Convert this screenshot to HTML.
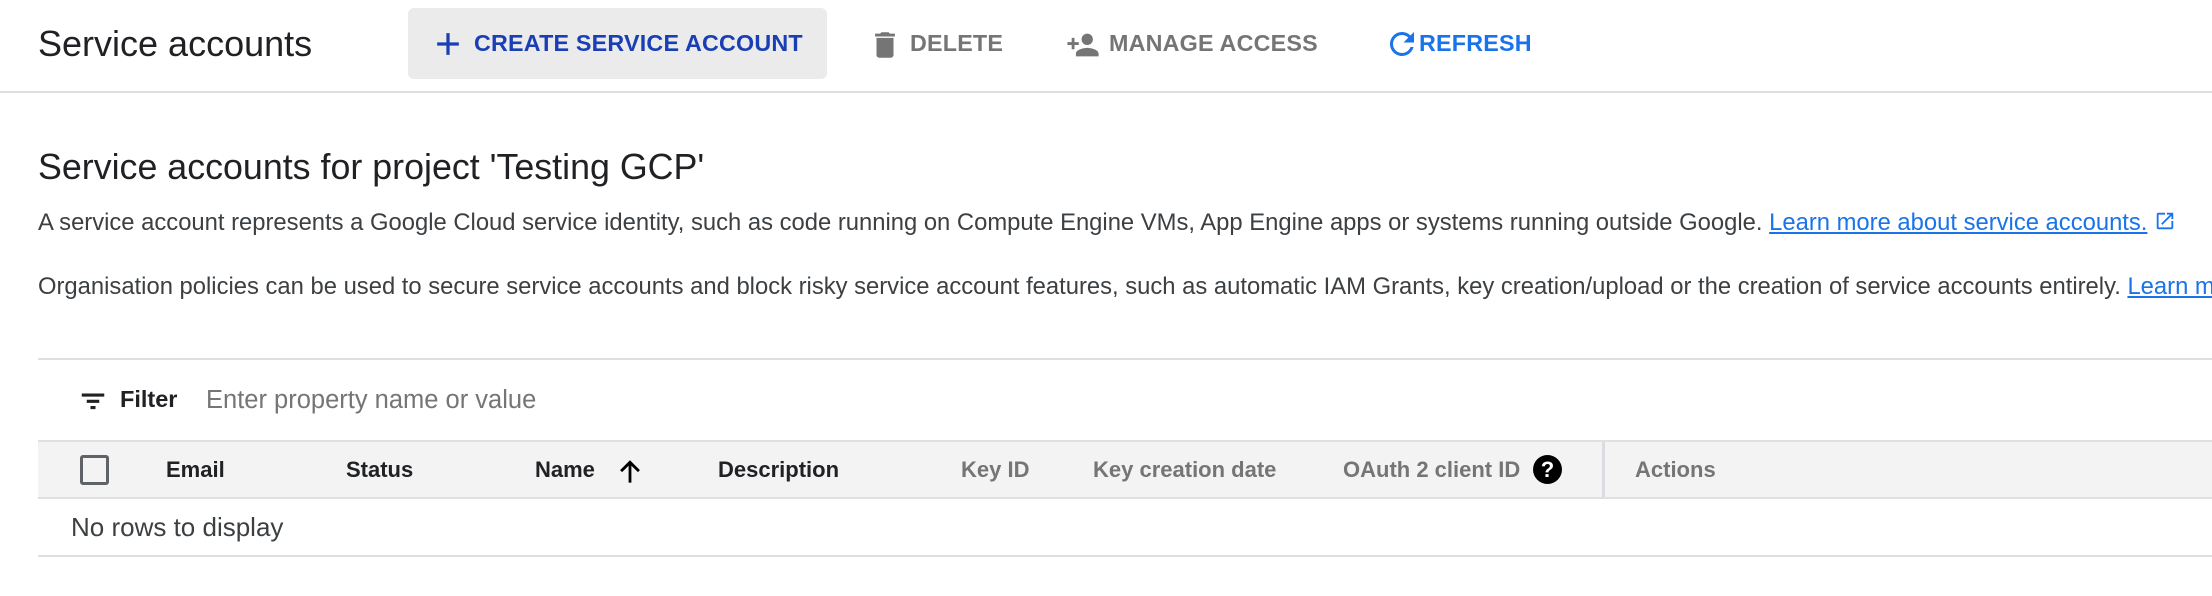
<!DOCTYPE html>
<html><head><meta charset="utf-8"><style>
*{margin:0;padding:0;box-sizing:border-box}
html,body{width:2212px;height:596px;overflow:hidden}
body{background:#fff;font-family:"Liberation Sans",Arial,sans-serif;color:#202124;position:relative}
#w{position:absolute;left:0;top:0;width:2212px;height:596px;overflow:hidden}
.a{position:absolute;white-space:nowrap}
.btn{font-size:23.3px;font-weight:bold;letter-spacing:0.2px}
.th{font-size:22px;font-weight:bold;top:457px}
.g{color:#757575}
p.a{font-size:23.8px;color:#3c4043}
a{color:#1a73e8;text-decoration:underline}
</style></head><body><div id="w">
<div class="a" style="left:38px;top:23px;font-size:36px">Service accounts</div>
<div class="a" style="left:408px;top:8px;width:419px;height:71px;background:#ebebeb;border-radius:6px"></div>
<svg class="a" style="left:435px;top:31px" width="26" height="26" viewBox="0 0 24 24"><path d="M10.5 2h3v8.5H22v3h-8.5V22h-3v-8.5H2v-3h8.5z" fill="#1a3fb5"/></svg>
<div class="a btn" style="left:474px;top:30px;color:#1a3fb5">CREATE SERVICE ACCOUNT</div>
<svg class="a" style="left:868px;top:28px" width="34" height="34" viewBox="0 0 24 24"><path d="M6 19c0 1.1.9 2 2 2h8c1.1 0 2-.9 2-2V7H6v12zM19 4h-3.5l-1-1h-5l-1 1H5v2h14V4z" fill="#757575"/></svg>
<div class="a btn g" style="left:910px;top:30px">DELETE</div>
<svg class="a" style="left:1066px;top:28px" width="34" height="34" viewBox="0 0 24 24"><path d="M15 12c2.2 0 4-1.8 4-4s-1.8-4-4-4-4 1.8-4 4 1.8 4 4 4zm-9-2V7H4v3H1v2h3v3h2v-3h3v-2H6zm9 4c-2.7 0-8 1.3-8 4v2h16v-2c0-2.7-5.3-4-8-4z" fill="#757575"/></svg>
<div class="a btn g" style="left:1109px;top:30px">MANAGE ACCESS</div>
<svg class="a" style="left:1384px;top:26px" width="36" height="36" viewBox="0 0 24 24"><path d="M17.65 6.35A7.96 7.96 0 0 0 12 4a8 8 0 1 0 7.73 10h-2.08A6 6 0 1 1 12 6c1.66 0 3.14.69 4.22 1.78L13 11h7V4l-2.35 2.35z" fill="#1a73e8"/></svg>
<div class="a btn" style="left:1419px;top:30px;color:#1a73e8">REFRESH</div>
<div class="a" style="left:0;top:91px;width:2212px;height:2px;background:#e0e0e0"></div>

<div class="a" style="left:38px;top:147px;font-size:35.8px;color:#202124">Service accounts for project 'Testing GCP'</div>
<p class="a" style="left:38px;top:209px">A service account represents a Google Cloud service identity, such as code running on Compute Engine VMs, App Engine apps or systems running outside Google. <a>Learn more about service accounts.</a> <svg width="22" height="22" viewBox="0 0 24 24" style="vertical-align:-2px"><path d="M19 19H5V5h7V3H5a2 2 0 0 0-2 2v14a2 2 0 0 0 2 2h14c1.1 0 2-.9 2-2v-7h-2v7zM14 3v2h3.59l-9.83 9.83 1.41 1.41L19 6.41V10h2V3h-7z" fill="#1a73e8"/></svg></p>
<p class="a" style="left:38px;top:273px">Organisation policies can be used to secure service accounts and block risky service account features, such as automatic IAM Grants, key creation/upload or the creation of service accounts entirely. <a>Learn more</a></p>

<div class="a" style="left:38px;top:358px;width:2174px;height:2px;background:#e0e0e0"></div>
<svg class="a" style="left:78px;top:386px" width="30" height="30" viewBox="0 0 24 24"><path d="M3 6h18v2.5H3zm4 5h10v2.5H7zm3 5h4v2.5h-4z" fill="#202124"/></svg>
<div class="a" style="left:120px;top:386px;font-size:23.5px;font-weight:bold">Filter</div>
<div class="a g" style="left:206px;top:386px;font-size:25.5px">Enter property name or value</div>

<div class="a" style="left:38px;top:440px;width:2174px;height:59px;background:#f3f3f3;border-top:2px solid #e0e0e0;border-bottom:2px solid #e0e0e0"></div>
<div class="a" style="left:80px;top:455px;width:29px;height:30px;border:3px solid #5f6368;border-radius:3px"></div>
<div class="a th" style="left:166px">Email</div>
<div class="a th" style="left:346px">Status</div>
<div class="a th" style="left:535px">Name</div>
<svg class="a" style="left:616px;top:456px" width="28" height="30" viewBox="0 0 24 24"><path d="M10.8 22V7.5L5.2 13 3.5 11.3 12 2.8l8.5 8.5-1.7 1.7-5.6-5.5V22z" fill="#000"/></svg>
<div class="a th" style="left:718px">Description</div>
<div class="a th g" style="left:961px">Key ID</div>
<div class="a th g" style="left:1093px">Key creation date</div>
<div class="a th g" style="left:1343px">OAuth 2 client ID</div>
<div class="a" style="left:1533px;top:455px;width:29px;height:29px;border-radius:50%;background:#000;color:#fff;font-weight:bold;font-size:22px;text-align:center;line-height:29px">?</div>
<div class="a" style="left:1602px;top:442px;width:3px;height:55px;background:#dadce0"></div>
<div class="a th g" style="left:1635px">Actions</div>
<div class="a" style="left:71px;top:512px;font-size:26px;color:#3c4043">No rows to display</div>
<div class="a" style="left:38px;top:555px;width:2174px;height:2px;background:#e0e0e0"></div>
</div></body></html>
